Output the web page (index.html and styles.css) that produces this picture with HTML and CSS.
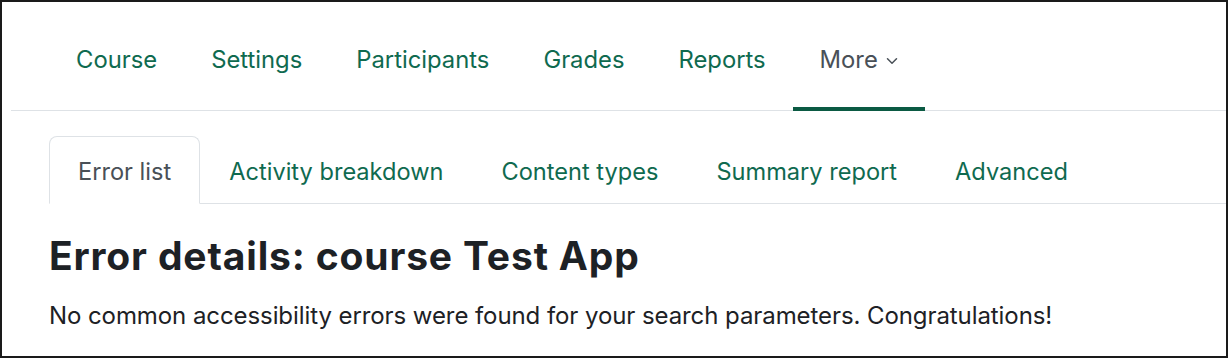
FILE: index.html
```html
<!DOCTYPE html>
<html lang="en">
<head>
    <meta charset="UTF-8">
    <title>Error details: course Test App</title>
    <link rel="stylesheet" href="styles.css">
</head>
<body>
    <div class="frame">
        <nav class="primary-nav">
            <a href="#" class="nav-link">Course</a>
            <a href="#" class="nav-link">Settings</a>
            <a href="#" class="nav-link">Participants</a>
            <a href="#" class="nav-link">Grades</a>
            <a href="#" class="nav-link">Reports</a>
            <a href="#" class="nav-link active">More
                <svg class="chevron" width="12" height="8" viewBox="0 0 12 8"><path d="M1.5 1.8 6 6.2l4.5-4.4" fill="none" stroke="currentColor" stroke-width="1.5" stroke-linecap="round" stroke-linejoin="round"/></svg>
            </a>
        </nav>

        <div class="content">
            <ul class="tabs">
                <li><a href="#" class="tab active">Error list</a></li>
                <li><a href="#" class="tab">Activity breakdown</a></li>
                <li><a href="#" class="tab">Content types</a></li>
                <li><a href="#" class="tab">Summary report</a></li>
                <li><a href="#" class="tab">Advanced</a></li>
            </ul>

            <h2>Error details: course Test App</h2>
            <p>No common accessibility errors were found for your search parameters. Congratulations!</p>
        </div>
    </div>
</body>
</html>
```

FILE: styles.css
```css
html, body {
    margin: 0;
    padding: 0;
    background: #fff;
}
body {
    font-family: Inter, "Noto Sans", sans-serif;
    color: #1d2125;
}
.frame {
    box-sizing: border-box;
    width: 1228px;
    height: 358px;
    border: 2px solid #1a1a1a;
    padding-left: 9px;
    overflow: hidden;
}
.primary-nav {
    display: flex;
    height: 108px;
    padding-left: 38px;
    border-bottom: 1px solid #dee2e6;
}
.nav-link {
    display: flex;
    align-items: center;
    gap: 8px;
    padding: 12px 27px 2px;
    color: #0f6a4f;
    text-decoration: none;
    font-size: 23.8px;
    border-bottom: 4px solid transparent;
    margin-bottom: -1px;
}
.nav-link.active {
    color: #495057;
    border-bottom-color: #0b5a43;
}
.chevron {
    margin-top: 2px;
}
.content {
    padding-left: 38px;
}
.tabs {
    display: flex;
    list-style: none;
    margin: 25px 0 0;
    padding: 0;
    border-bottom: 1px solid #dee2e6;
}
.tab {
    display: block;
    padding: 20px 28px 17px;
    margin-bottom: -1px;
    color: #0f6a4f;
    text-decoration: none;
    font-size: 23.6px;
    border: 1px solid transparent;
    border-radius: 8px 8px 0 0;
}
.tab.active {
    color: #495057;
    background: #fff;
    border-color: #dee2e6 #dee2e6 #fff;
}
h2 {
    margin: 29px 0 0;
    font-size: 39px;
    font-weight: 700;
    letter-spacing: 0.85px;
    line-height: 1.2;
}
p {
    margin: 21px 0 0;
    font-size: 24px;
    letter-spacing: -0.08px;
}
```
